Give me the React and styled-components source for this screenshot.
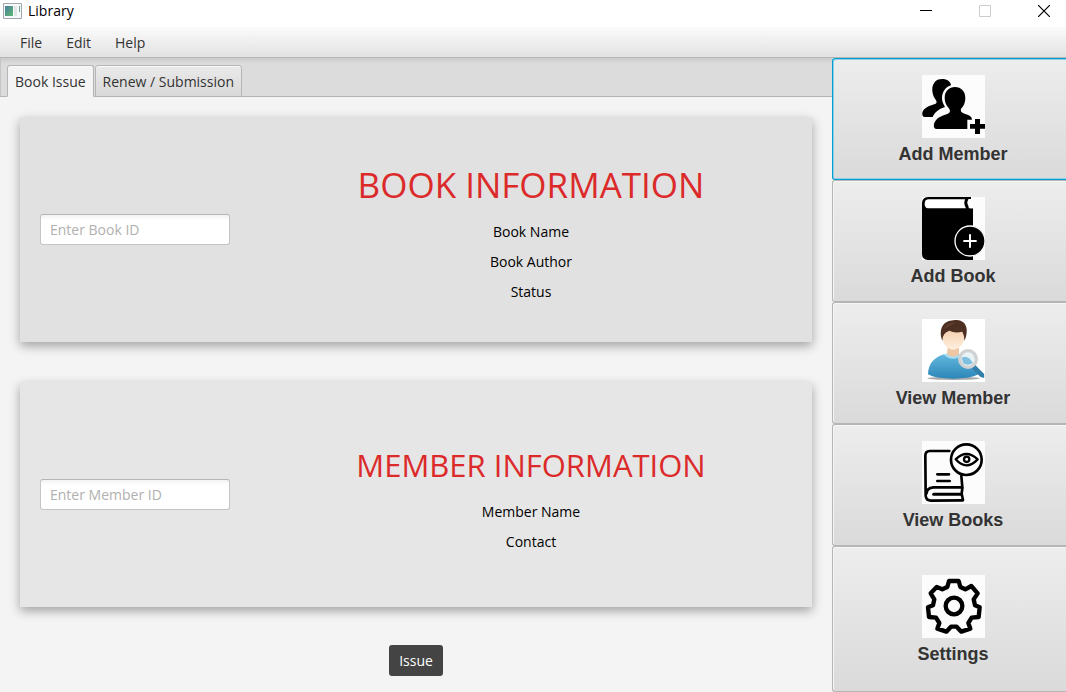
import React from "react";
import styled, { createGlobalStyle } from "styled-components";

const GlobalStyle = createGlobalStyle`
  * { box-sizing: border-box; }
  body {
    margin: 0;
    background: #f4f4f4;
    color: #333;
    font-family: "Open Sans", "Noto Sans", sans-serif;
    font-size: 14px;
    line-height: 20px;
  }
  button, input { font: inherit; color: inherit; }
`;

const Window = styled.div`
  min-height: 100vh;
  display: flex;
  flex-direction: column;
`;

const TitleBar = styled.header`
  display: flex;
  align-items: center;
  height: 27px;
  padding: 0 0 6px 3px;
  background: #fff;
  color: #000;
`;

const Title = styled.h1`
  flex: 1;
  margin: 0 0 0 6px;
  font-size: 14px;
  line-height: 20px;
  font-weight: 400;
`;

const WindowControls = styled.div`
  display: flex;
  gap: 15px;
`;

const WindowButton = styled.button`
  display: flex;
  align-items: center;
  justify-content: center;
  width: 44px;
  height: 20px;
  padding: 0;
  border: 0;
  background: none;
`;

const MenuBar = styled.nav`
  display: flex;
  gap: 4px;
  height: 31px;
  padding: 2px 10px 0;
  border-bottom: 1px solid #b5b5b5;
  background: linear-gradient(#fbfbfb, #e2e2e2);
`;

const MenuButton = styled.button`
  padding: 0 10px;
  border: 0;
  background: none;
`;

const Body = styled.div`
  flex: 1;
  display: flex;
`;

const Main = styled.main`
  flex: 1;
  display: flex;
  flex-direction: column;
`;

const TabHeader = styled.div`
  display: flex;
  align-items: flex-end;
  gap: 1px;
  height: 39px;
  padding-left: 7px;
  background: linear-gradient(#cbcbcb, #dcdcdc 6px);
  box-shadow: inset 0 -1px #b5b5b5, inset 1px 0 #c4c4c4;
`;

const Tab = styled.button`
  height: 32px;
  padding: 2px 7px 0;
  border: 1px solid #b5b5b5;
  border-bottom-color: ${(p) => (p.$active ? "#f4f4f4" : "#b5b5b5")};
  border-radius: 3px 3px 0 0;
  background: ${(p) => (p.$active ? "#f4f4f4" : "linear-gradient(#eaeaea, #d9d9d9)")};
  box-shadow: inset 0 1px #fafafa;
`;

const TabContent = styled.section`
  flex: 1;
  display: flex;
  flex-direction: column;
  align-items: center;
  padding: 20px 20px 16px;
  background: #f4f4f4;
`;

const Panel = styled.section`
  display: grid;
  grid-template-columns: 230px 1fr;
  align-items: center;
  width: 100%;
  height: 225px;
  margin-bottom: ${(p) => p.$gap}px;
  background: ${(p) => p.$fill};
  box-shadow: 0 4px 10px rgba(0, 0, 0, 0.34);
`;

const TextField = styled.input`
  width: 190px;
  height: 31px;
  margin-left: 20px;
  padding: 0 9px;
  border: 1px solid #c4c4c4;
  border-top-color: #b5b5b5;
  border-radius: 3px;
  background: linear-gradient(#f2f2f2, #fff 5px);
  &::placeholder { color: #b0b0b0; opacity: 1; }
`;

const Info = styled.div`
  display: flex;
  flex-direction: column;
  align-items: center;
  gap: 10px;
  color: #000;
`;

const InfoHeading = styled.h2`
  margin: 0;
  font-size: ${(p) => p.$size}px;
  line-height: 54px;
  font-weight: 400;
  color: #dc2a2a;
  white-space: nowrap;
`;

const InfoLine = styled.p`
  margin: 0;
`;

const IssueButton = styled.button`
  height: 31px;
  padding: 0 10px;
  border: 0;
  border-radius: 3px;
  background: #444;
  color: #fff;
`;

const Sidebar = styled.aside`
  width: 234px;
  display: flex;
  flex-direction: column;
`;

const SideButton = styled.button`
  flex: ${(p) => (p.$fill ? "1 0 122px" : "0 0 122px")};
  display: flex;
  flex-direction: column;
  align-items: center;
  justify-content: center;
  gap: 5px;
  padding: 2px 0 0 7px;
  border: 1px solid ${(p) => (p.$focused ? "#039ed3" : "#b5b5b5")};
  border-right-width: 0;
  border-radius: 3px 0 0 3px;
  background: linear-gradient(#ededed, #dadada);
  box-shadow: ${(p) =>
    p.$focused ? "inset 1px 1px #8fcfe6, inset 0 -1px #8fcfe6" : "inset 1px 1px #f6f6f6"};
  color: #333;
  font-family: "Liberation Sans", Arial, sans-serif;
  font-size: 18px;
  line-height: 22px;
  font-weight: 700;
`;

const Picture = styled.svg`
  width: 63px;
  height: 63px;
  background: #fcfcfc;
`;

const AddMemberIcon = () => (
  <Picture viewBox="0 0 189 189">
    <path d="M60 12C76 12 86 20 87 31C71 36 60 50 60 70C60 81 65 89 69 96C53 101 38 111 32 126H9C2 126 0 120 1 113C4 98 24 91 41 86C46 83 44 77 39 71C33 63 30 51 31 39C33 22 44 12 60 12Z" />
    <path d="M99 36C117 36 130 48 130 69C130 83 125 94 117 101C115 110 119 113 130 117C143 121 150 126 150 134H136V162H45C37 162 34 156 36 147C40 129 61 121 78 116C86 112 85 105 80 99C73 91 68 82 68 68C68 49 81 36 99 36Z" />
    <path d="M159 132h15v15h15v14h-15v16h-15v-16h-15v-14h15z" />
  </Picture>
);

const AddBookIcon = () => (
  <Picture viewBox="0 0 189 189">
    <path d="M18 0H147V6H140V34H153V189H18Q0 188 0 170V18Q1 1 18 0Z" />
    <path d="M18 7H129Q124 21 132 34H18Q8 33 8 21Q8 8 18 7Z" fill="#fff" />
    <path d="M139 7H153V34H145Q131 21 139 7Z" fill="#fff" />
    <circle cx="144" cy="132" r="46" />
    <circle cx="144" cy="132" r="45" fill="none" stroke="#fff" strokeWidth="4" />
    <path d="M144 112v40M124 132h40" stroke="#fff" strokeWidth="6" />
  </Picture>
);

const ViewMemberIcon = () => (
  <Picture viewBox="0 0 189 189">
    <defs>
      <linearGradient id="shirt" x1="0" y1="0" x2="0" y2="1">
        <stop offset="0" stopColor="#65b8de" />
        <stop offset="1" stopColor="#2b86b8" />
      </linearGradient>
      <linearGradient id="face" x1="0" y1="0" x2="0" y2="1">
        <stop offset="0" stopColor="#f5cfae" />
        <stop offset="1" stopColor="#fff0df" />
      </linearGradient>
    </defs>
    <rect width="189" height="189" fill="#fff" />
    <ellipse cx="95" cy="178" rx="79" ry="5" fill="#aaa" />
    <path d="M18 166C18 133 40 111 70 105Q94 115 116 105C147 111 169 139 169 166Q145 179 94 179Q40 179 18 166Z" fill="url(#shirt)" />
    <path d="M64 106Q93 96 121 106Q94 133 64 106Z" fill="#a9ddf2" />
    <path d="M77 84H111V105Q94 122 75 105Z" fill="#efc6a4" />
    <path d="M62 43Q93 21 127 43C132 69 113 92 94 92C73 92 56 68 62 43Z" fill="url(#face)" />
    <path d="M61 65C52 46 56 22 69 12Q79 4 94 4C118 -2 137 14 134 39C134 49 130 60 127 66Q128 52 121 38Q99 44 82 35Q61 41 61 65Z" fill="#4d3022" />
    <path d="M66 29Q77 10 101 12Q82 18 66 29Z" fill="#694432" />
    <path d="M157 139L184 166V174L177 172L151 146Z" fill="#337fac" stroke="#337fac" strokeWidth="5" />
    <circle cx="138" cy="120" r="25" fill="#e8f3f8" stroke="#d0d1d3" strokeWidth="10" />
    <path d="M119 117Q135 104 153 132Q137 142 124 133Z" fill="#7fbfe0" />
  </Picture>
);

const ViewBooksIcon = () => (
  <Picture viewBox="0 0 189 189" fill="none" stroke="#000" strokeWidth="8" strokeLinecap="round" strokeLinejoin="round">
    <path d="M82 30H23Q10 30 10 45L11 164Q12 179 27 179L122 178" />
    <path d="M118 105L121 139H34Q14 141 14 157" />
    <path d="M121 141L119 158L123 177" />
    <path d="M35 160H116" strokeWidth="9" />
    <path d="M46 100H81M46 120H83" />
    <circle cx="133" cy="56" r="46" fill="#fdfdfd" />
    <path d="M101 55Q133 23 167 55Q133 91 101 55Z" strokeWidth="7" />
    <circle cx="134" cy="55" r="8" strokeWidth="7" />
  </Picture>
);

const SettingsIcon = () => (
  <Picture viewBox="0 0 189 189" fill="none" stroke="#000" strokeWidth="13" strokeLinejoin="round">
    <path d="M81 18H110L115 36L130 43L148 33L167 55L155 73L159 91L173 97L170 126L149 128L139 144L145 161L118 170L104 155H87L73 170L46 161L52 144L42 128L21 126L18 97L33 91L37 73L26 55L44 36L61 43L76 36Z" />
    <circle cx="96" cy="93" r="25" />
  </Picture>
);

const actions = [
  { label: "Add Member", Icon: AddMemberIcon, focused: true },
  { label: "Add Book", Icon: AddBookIcon },
  { label: "View Member", Icon: ViewMemberIcon },
  { label: "View Books", Icon: ViewBooksIcon },
  { label: "Settings", Icon: SettingsIcon, fill: true },
];

const AppIcon = () => (
  <svg width="19" height="16" viewBox="0 0 19 16" aria-hidden="true">
    <defs>
      <linearGradient id="screen" x1="0" y1="0" x2="1" y2="1">
        <stop offset="0" stopColor="#4a7d98" />
        <stop offset="1" stopColor="#5fb977" />
      </linearGradient>
    </defs>
    <path d="M.5 .5h18v15H.5z" fill="#f7f8fa" stroke="#a3a8b0" />
    <path d="M2 3h8v10H2z" fill="url(#screen)" />
    <path d="M11 3h3v10h-3z" fill="#e3e6e8" />
    <path d="M16 3h1v6h-1z" fill="#6aa594" />
  </svg>
);

export default function App() {
  return (
    <>
      <GlobalStyle />
      <Window>
        <TitleBar>
          <AppIcon />
          <Title>Library</Title>
          <WindowControls>
            <WindowButton aria-label="Minimize">
              <svg width="12" height="12"><path d="M0 5.5h12" stroke="#000" /></svg>
            </WindowButton>
            <WindowButton aria-label="Maximize" disabled>
              <svg width="12" height="12"><path d="M.5 .5h11v11H.5z" fill="none" stroke="#ccc" /></svg>
            </WindowButton>
            <WindowButton aria-label="Close">
              <svg width="12" height="12"><path d="M0 0l12 12M12 0L0 12" stroke="#000" strokeWidth="1.2" /></svg>
            </WindowButton>
          </WindowControls>
        </TitleBar>
        <MenuBar>
          <MenuButton>File</MenuButton>
          <MenuButton>Edit</MenuButton>
          <MenuButton>Help</MenuButton>
        </MenuBar>
        <Body>
          <Main>
            <TabHeader role="tablist">
              <Tab role="tab" aria-selected="true" $active>Book Issue</Tab>
              <Tab role="tab" aria-selected="false">Renew / Submission</Tab>
            </TabHeader>
            <TabContent>
              <Panel $gap={40} $fill="#e1e1e1">
                <TextField aria-label="Book ID" placeholder="Enter Book ID" />
                <Info>
                  <InfoHeading $size={35}>BOOK INFORMATION</InfoHeading>
                  <InfoLine>Book Name</InfoLine>
                  <InfoLine>Book Author</InfoLine>
                  <InfoLine>Status</InfoLine>
                </Info>
              </Panel>
              <Panel $gap={38} $fill="#e6e6e6">
                <TextField aria-label="Member ID" placeholder="Enter Member ID" />
                <Info>
                  <InfoHeading $size={31}>MEMBER INFORMATION</InfoHeading>
                  <InfoLine>Member Name</InfoLine>
                  <InfoLine>Contact</InfoLine>
                </Info>
              </Panel>
              <IssueButton>Issue</IssueButton>
            </TabContent>
          </Main>
          <Sidebar>
            {actions.map(({ label, Icon, focused, fill }) => (
              <SideButton key={label} $focused={focused} $fill={fill}>
                <Icon />
                {label}
              </SideButton>
            ))}
          </Sidebar>
        </Body>
      </Window>
    </>
  );
}
